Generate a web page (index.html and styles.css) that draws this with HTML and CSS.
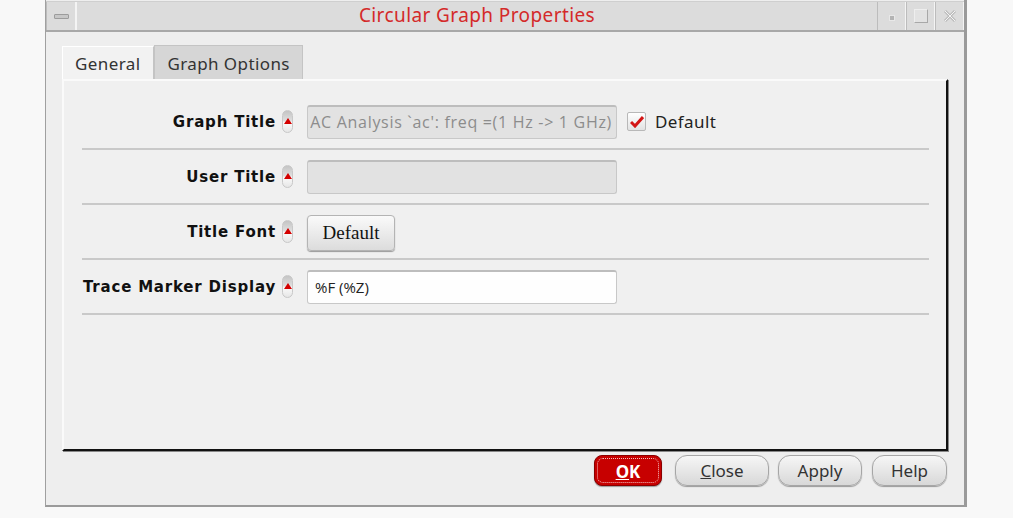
FILE: index.html
```html
<!DOCTYPE html>
<html lang="en">

<head>
    <meta charset="UTF-8">
    <title>Circular Graph Properties</title>
    <link rel="stylesheet" href="styles.css">
</head>

<body>

    <div class="window">
        <div class="titlebar">
            <div class="tb-box"><span class="tb-menu"></span></div>
            <div class="tb-title">Circular Graph Properties</div>
            <div class="tb-box"><span class="tb-min"></span></div>
            <div class="tb-box"><span class="tb-max"></span></div>
            <div class="tb-box">
                <svg width="14" height="14" viewBox="0 0 14 14">
                    <path d="M2 2 L12 12 M12 2 L2 12" stroke="#bcbcbc" stroke-width="3" fill="none"/>
                    <path d="M2 2 L12 12 M12 2 L2 12" stroke="#f4f4f4" stroke-width="1" fill="none"/>
                </svg>
            </div>
        </div>

        <div class="content">
            <div class="tabs">
                <div class="tab active">General</div>
                <div class="tab">Graph Options</div>
            </div>

            <div class="panel">
                <div class="row">
                    <div class="label">Graph Title</div>
                    <span class="toggle"></span>
                    <div class="field disabled"><span>AC Analysis `ac': freq =(1 Hz -&gt; 1 GHz)</span></div>
                    <label class="check"><span class="box">
                        <svg width="14" height="12" viewBox="0 0 14 12"><path d="M1 6 L5 10 L13 1" stroke="#d31414" stroke-width="3" fill="none"/></svg>
                    </span>Default</label>
                </div>
                <div class="row">
                    <div class="label">User Title</div>
                    <span class="toggle"></span>
                    <div class="field disabled"></div>
                </div>
                <div class="row">
                    <div class="label">Title Font</div>
                    <span class="toggle"></span>
                    <button class="font-btn">Default</button>
                </div>
                <div class="row">
                    <div class="label">Trace Marker Display</div>
                    <span class="toggle"></span>
                    <input class="field" type="text" value="%F (%Z)">
                </div>
            </div>

            <div class="actions">
                <button class="btn ok"><span><u>O</u>K</span></button>
                <button class="btn close"><u>C</u>lose</button>
                <button class="btn apply">Apply</button>
                <button class="btn help">Help</button>
            </div>
        </div>
    </div>

</body>

</html>
```

FILE: styles.css
```css
body {
    margin: 0;
    background-color: #f8f8f8;
    font-family: "Noto Sans", "Open Sans", sans-serif;
}

.window {
    margin-left: 45px;
    width: 918px;
    height: 505px;
    background-color: #eeeeee;
    border-left: 1px solid #a0a0a0;
    border-right: 3px solid #9a9a9a;
    border-bottom: 2px solid #9a9a9a;
    display: flex;
    flex-direction: column;
}

.titlebar {
    display: flex;
    height: 28px;
    margin-top: 1px;
    border-bottom: 2px solid #a8a8a8;
    border-top: 1px solid #cfcfcf;
    background-color: #dcdcdc;
}

.tb-box {
    width: 27px;
    display: flex;
    align-items: center;
    justify-content: center;
    border-right: 1px solid #f4f4f4;
    border-left: 1px solid #bcbcbc;
}

.tb-box:first-child {
    width: 28px;
}

.tb-menu {
    width: 13px;
    height: 3px;
    background: #c7c7c7;
    border: 1px solid #9c9c9c;
    border-radius: 1px;
}

.tb-min {
    width: 4px;
    height: 4px;
    background: #b4b4b4;
    border: 1px solid #e8e8e8;
    margin-top: 4px;
}

.tb-max {
    width: 12px;
    height: 12px;
    border: 1px solid #eeeeee;
    border-right-color: #a8a8a8;
    border-bottom-color: #a8a8a8;
    background: #e2e2e2;
}

.tb-title {
    flex: 1;
    text-align: center;
    color: #d42a2a;
    font-size: 19px;
    letter-spacing: 0.4px;
    line-height: 27px;
    border-left: 1px solid #f4f4f4;
}

.content {
    flex: 1;
    display: flex;
    flex-direction: column;
    padding: 13px 16px 0 16px;
}

.tabs {
    display: flex;
    height: 34px;
}

.tab {
    font-size: 17px;
    letter-spacing: 0.4px;
    color: #333;
    padding: 0 12px;
    line-height: 36px;
    background-color: #d6d6d6;
    border: 1px solid #c4c4c4;
    border-bottom: none;
}

.tab.active {
    padding: 0 13px 0 12px;
    background-color: #f2f2f2;
    border-color: #ffffff;
    border-right-color: #c4c4c4;
    line-height: 34px;
    margin-top: 1px;
}

.panel {
    box-sizing: border-box;
    height: 372px;
    background-color: #f0f0f0;
    border-top: 2px solid #fafafa;
    border-left: 2px solid #fafafa;
    border-right: 2px solid #111;
    border-bottom: 2px solid #111;
    padding: 14px 17px 0 18px;
    box-shadow: 1px 1px 0 #888;
}

.row {
    display: flex;
    align-items: center;
    height: 53px;
    border-bottom: 2px solid #c9c9c9;
}

.label {
    width: 194px;
    text-align: right;
    font-family: "DejaVu Sans", sans-serif;
    font-weight: bold;
    font-size: 15px;
    letter-spacing: 0.8px;
    color: #111;
}

.toggle {
    position: relative;
    width: 11px;
    height: 23px;
    margin: 0 14px 0 6px;
    border-radius: 6px;
    background: linear-gradient(#c4c4c4, #dedede 45%, #fafafa 55%, #e6e6e6);
    border: 1px solid #c8c8c8;
    box-sizing: border-box;
}

.toggle::after {
    content: "";
    position: absolute;
    left: 1px;
    top: 7px;
    border-left: 4px solid transparent;
    border-right: 4px solid transparent;
    border-bottom: 6px solid #d40000;
}

.field {
    width: 310px;
    height: 34px;
    box-sizing: border-box;
    border: 1px solid #c8c8c8;
    border-top: 2px solid #bdbdbd;
    border-radius: 3px;
    background-color: #fefefe;
    font-family: "Open Sans", sans-serif;
    font-size: 15px;
    color: #222;
    padding: 0 7px;
}

.field.disabled {
    display: flex;
    align-items: center;
    justify-content: flex-end;
    overflow: hidden;
    white-space: nowrap;
    background-color: #e2e2e2;
    color: #8c8c8c;
    font-size: 16px;
    letter-spacing: 0.7px;
    padding: 0 4px 0 0;
}

.check {
    display: flex;
    align-items: center;
    margin-left: 10px;
    font-size: 17px;
    letter-spacing: 0.4px;
    color: #222;
}

.box {
    width: 17px;
    height: 17px;
    margin-right: 9px;
    display: flex;
    align-items: center;
    justify-content: center;
    background: linear-gradient(#ffffff, #e2e2e2);
    border: 1px solid #b8b8b8;
    border-radius: 2px;
}

.font-btn {
    width: 88px;
    height: 36px;
    font-family: "Liberation Serif", serif;
    font-size: 19px;
    color: #111;
    border: 1px solid #b4b4b4;
    border-radius: 4px;
    background: linear-gradient(#fafafa, #dcdcdc);
    box-shadow: 0 1px 1px #999;
    margin-top: 3px;
}

.actions {
    display: flex;
    justify-content: flex-end;
    padding-top: 4px;
    padding-right: 1px;
}

.btn {
    box-sizing: border-box;
    height: 31px;
    padding: 0;
    margin-left: 10px;
    font-family: "Noto Sans", sans-serif;
    font-size: 17px;
    color: #333;
    border: 1px solid #a6a6a6;
    border-radius: 12px;
    background: linear-gradient(#f6f6f6, #d8d8d8);
    box-shadow: 0 1px 1px #999;
}

.btn.close {
    width: 94px;
    margin-left: 13px;
}

.btn.apply {
    width: 84px;
    margin-left: 9px;
}

.btn.help {
    width: 75px;
}

.btn.ok {
    width: 68px;
    padding: 2px;
    background: #c70000;
    border-color: #8a0000;
    border-radius: 8px;
    color: #fff;
    font-weight: bold;
}

.btn.ok span {
    display: block;
    height: 100%;
    line-height: 25px;
    border: 1px dotted #f4c0c0;
    border-radius: 6px;
    box-sizing: border-box;
}
```
